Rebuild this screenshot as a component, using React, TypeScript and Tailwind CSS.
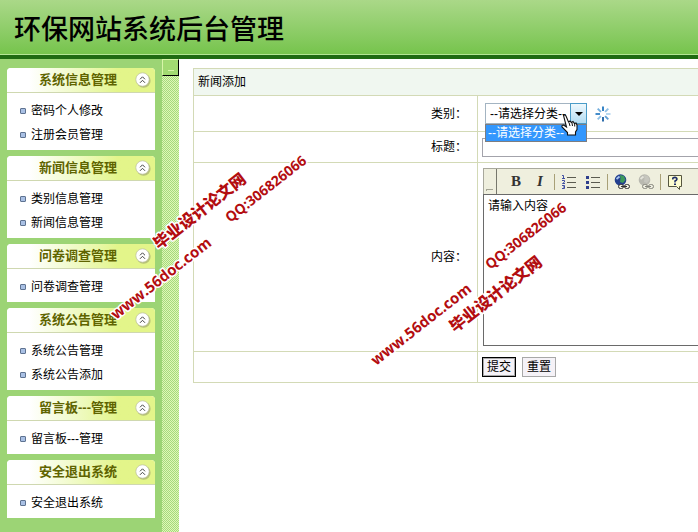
import type { ReactNode } from 'react';

interface MenuGroup {
  title: string;
  items: string[];
}

const MENU: MenuGroup[] = [
  { title: '系统信息管理', items: ['密码个人修改', '注册会员管理'] },
  { title: '新闻信息管理', items: ['类别信息管理', '新闻信息管理'] },
  { title: '问卷调查管理', items: ['问卷调查管理'] },
  { title: '系统公告管理', items: ['系统公告管理', '系统公告添加'] },
  { title: '留言板---管理', items: ['留言板---管理'] },
  { title: '安全退出系统', items: ['安全退出系统'] },
];

function CollapseIcon() {
  return (
    <svg viewBox="0 0 16 16" className="size-4">
      <circle cx="8.6" cy="8.8" r="7" fill="#9aa06c" opacity="0.6" />
      <circle cx="7.5" cy="7.5" r="6.7" fill="#fff" stroke="#b9bd9a" strokeWidth="0.7" />
      <path d="M5 7.3 7.5 4.8 10 7.3M5 10.8 7.5 8.3 10 10.8" fill="none" stroke="#444" strokeWidth="1" />
    </svg>
  );
}

function MenuPanel({ title, items }: MenuGroup) {
  return (
    <section className="overflow-hidden rounded-t bg-white">
      <button
        type="button"
        className="flex h-[25px] w-full items-center border-b border-[#cfd8b0] bg-linear-to-r from-white from-15% to-[#e3f58a] to-75% pr-1 pl-[14px]"
      >
        <span className="flex-1 text-center text-[13px] leading-4 font-bold text-[#5f6400]">{title}</span>
        <CollapseIcon />
      </button>
      <ul className="pt-1.5 pb-[3px]">
        {items.map((item) => (
          <li key={item} className="flex h-6 items-center gap-[5px] pl-[13px]">
            <span className="size-1.5 rounded-[1px] border border-[#5f7391] bg-[#a9c0e4]" />
            <a href="#" className="text-xs text-black">
              {item}
            </a>
          </li>
        ))}
      </ul>
    </section>
  );
}

function Row({ label, htmlFor, height, children }: { label: string; htmlFor?: string; height: string; children: ReactNode }) {
  return (
    <tr className={height}>
      <th scope="row" className="border border-[#d3dab6] pr-[10px] text-right font-normal">
        {label && <label htmlFor={htmlFor}>{label}</label>}
      </th>
      <td className="border border-r-0 border-[#d3dab6] p-0 pl-1">{children}</td>
    </tr>
  );
}

function Spinner() {
  const colors = ['#2f7fc4', '#8fc0e6', '#b4d6f0', '#5f9fd4', '#2466a8', '#8fc0e6', '#3a86c8', '#74aedd'];
  return (
    <svg viewBox="0 0 16 16" className="size-4">
      {colors.map((c, i) => (
        <path key={i} d="M8 0.5V5" stroke={c} strokeWidth="1.9" transform={`rotate(${i * 45} 8 8)`} />
      ))}
    </svg>
  );
}

function HandCursor() {
  return (
    <svg viewBox="0 0 17 22" className="pointer-events-none absolute top-[11px] left-[76px] z-20 h-[22px] w-[17px]">
      <path
        d="M2.500 1.500Q4 0 5 2L7.500 8 9 7 10.500 8.500 12 7.500 13.500 9.500 15 9 16 11V15.500L14.500 18V21H6.500V18.500L1 13Q0.500 11 2.500 11L5.500 13Z"
        fill="#fff"
        stroke="#111"
        strokeWidth="1.1"
      />
      <path d="M8 8.500 9 12M11 9 11.500 12M13.700 10V12.500" stroke="#111" />
    </svg>
  );
}

function CategorySelect() {
  return (
    <div className="relative w-[102px]">
      <select
        id="category"
        className="block h-[21px] w-full appearance-none border border-[#a3b4c2] bg-white pl-1 text-xs text-black outline-none"
      >
        <option>--请选择分类--</option>
      </select>
      <span className="pointer-events-none absolute inset-y-0 right-0 flex w-[17px] items-center justify-center border border-[#4a9cc8] bg-linear-to-b from-[#eef8fd] to-[#b2dcf2]">
        <svg viewBox="0 0 8 4" className="h-1 w-2">
          <path d="M0 0H8L4 4Z" fill="#000" />
        </svg>
      </span>
      <div className="absolute top-full left-0 z-10 w-full border border-[#7d7d80] bg-[#3397fd] pl-0.5 text-xs leading-4 text-white">
        --请选择分类--
      </div>
      <HandCursor />
    </div>
  );
}

function ListIcon({ ordered }: { ordered?: boolean }) {
  return (
    <svg viewBox="0 0 16 16" className="size-4">
      <path d="M6 3.500H15M6 8.500H15M6 13.500H15" stroke="#5b5b50" />
      {ordered ? (
        <path
          d="M1 1.500H2.500V4.500M1 4.500H4M1 6.500H3.500V8L1.500 9.500H4M1 11.500H3.500V14.500H1M2 13H3.500"
          fill="none"
          stroke="#2f3f9c"
          strokeWidth="0.9"
        />
      ) : (
        <path d="M1 2H4V5H1ZM1 7H4V10H1ZM1 12H4V15H1Z" fill="#2f3f8c" />
      )}
    </svg>
  );
}

function LinkIcon({ disabled }: { disabled?: boolean }) {
  return (
    <svg viewBox="0 0 16 16" className="size-4">
      <circle cx="6.500" cy="6" r="5.800" fill={disabled ? '#b9b9b0' : '#24408f'} />
      <path d="M6 1 10 2 11.500 6 9 9 6 8 6.500 4Z" fill={disabled ? '#c6c6be' : '#3c9a5a'} />
      <path d="M2.500 5 5.500 2.500" stroke={disabled ? '#e4e4dc' : '#a8c4f0'} strokeWidth="1.800" />
      <g fill="none" stroke={disabled ? '#85857c' : '#333'}>
        <rect x="4.500" y="10.500" width="5" height="4" rx="2" fill="#eeeee0" />
        <rect x="10.500" y="10.500" width="5" height="4" rx="2" fill="#eeeee0" />
        <path d="M7 12.500H13" />
      </g>
    </svg>
  );
}

function HelpIcon() {
  return (
    <svg viewBox="0 0 16 16" className="size-4">
      <path d="M1.500 1.500H14.500V12.500H12.500V15.500L9.500 12.500H1.500Z" fill="#fdfdd0" stroke="#555540" />
      <path d="M5.800 5.400V4.200Q8 2.500 9.800 4.200 10.500 5.800 8 7V8.500" fill="none" stroke="#1d2c6a" strokeWidth="1.500" />
      <rect x="7" y="9.500" width="2" height="1.500" fill="#1d2c6a" />
    </svg>
  );
}

function ToolButton({ label, children }: { label: string; children: ReactNode }) {
  return (
    <button
      type="button"
      aria-label={label}
      className="flex size-6 items-center justify-center font-['Liberation_Serif',serif] text-[15px] text-[#333]"
    >
      {children}
    </button>
  );
}

function Separator() {
  return <span className="mr-0.5 ml-0.5 h-4 w-px bg-[#a8a077]" />;
}

function Editor() {
  return (
    <div className="ml-px">
      <div className="flex h-[26px] items-stretch border-t border-l border-[#a8a89c] bg-[#efefde]">
        <span className="flex w-[13px] items-end border-r border-[#77776c] pb-[3px] pl-0.5">
          <span className="h-0.5 w-[7px] border-t border-l border-[#a5a595]" />
        </span>
        <div className="flex items-center pl-[7px]">
          <ToolButton label="Bold">
            <b>B</b>
          </ToolButton>
          <ToolButton label="Italic">
            <b className="italic">I</b>
          </ToolButton>
          <Separator />
          <ToolButton label="Numbered list">
            <ListIcon ordered />
          </ToolButton>
          <ToolButton label="Bulleted list">
            <ListIcon />
          </ToolButton>
          <Separator />
          <ToolButton label="Insert link">
            <LinkIcon />
          </ToolButton>
          <ToolButton label="Remove link">
            <LinkIcon disabled />
          </ToolButton>
          <Separator />
          <ToolButton label="Help">
            <HelpIcon />
          </ToolButton>
        </div>
      </div>
      <textarea
        id="content"
        defaultValue="请输入内容"
        className="block h-[152px] w-full resize-none border border-r-0 border-[#6a6a6a] bg-white px-1 py-0.5 text-xs leading-[18px] outline-none"
      />
    </div>
  );
}

function Watermark() {
  return (
    <svg
      aria-hidden="true"
      width="698"
      height="532"
      className="pointer-events-none absolute top-0 left-0 z-30 max-w-full overflow-hidden fill-[#b30d10] stroke-white font-['Open_Sans','Noto_Sans_CJK_SC',sans-serif] font-bold"
      strokeWidth="3"
      strokeLinejoin="round"
      paintOrder="stroke"
    >
      <text transform="translate(116 320) rotate(-38)" fontSize="15">www.56doc.com</text>
      <text transform="translate(159 250) rotate(-38)" fontSize="16" fontWeight="900">毕业设计论文网</text>
      <text transform="translate(230 223) rotate(-38)" fontSize="14">QQ:306826066</text>
      <text transform="translate(376 366) rotate(-38)" fontSize="15">www.56doc.com</text>
      <text transform="translate(455 333) rotate(-38)" fontSize="16" fontWeight="900">毕业设计论文网</text>
      <text transform="translate(490 270) rotate(-38)" fontSize="14">QQ:306826066</text>
    </svg>
  );
}

export default function App() {
  return (
    <div className="relative flex min-h-screen flex-col overflow-hidden bg-white font-['Liberation_Sans','Noto_Sans_CJK_SC',sans-serif] text-xs text-black">
      <header className="border-b-4 border-[#1f6b12]">
        <div className="border-b border-[#b4e694] bg-linear-to-b from-[#aad888] to-[#76c44c] pt-[14px] pb-[7px] pl-[14px]">
          <h1 className="text-[27px] leading-[33px] font-medium">环保网站系统后台管理</h1>
        </div>
      </header>
      <div className="flex flex-1">
        <nav className="flex w-[162px] shrink-0 flex-col gap-1.5 bg-[#9cd475] py-[9px] pr-[7px] pl-[7px]">
          {MENU.map((group) => (
            <MenuPanel key={group.title} {...group} />
          ))}
        </nav>
        <div className="w-[17px] shrink-0 bg-[conic-gradient(#a5db7c_25%,#e0f6b8_0_50%,#a5db7c_0_75%,#e0f6b8_0)] bg-size-[2px_2px]">
          <button
            type="button"
            aria-label="Toggle menu"
            className="flex size-[17px] items-end justify-center border border-t-[#d8f5a8] border-r-black border-b-black border-l-[#d8f5a8] bg-[#a2da72] pb-1"
          >
            <span className="h-px w-1.5 bg-[#d8f5a8]" />
          </button>
        </div>
        <main className="min-w-0 flex-1 pt-[9px] pl-[14px]">
          <form>
            <table className="w-full border-collapse">
              <colgroup>
                <col className="w-[284px]" />
                <col />
              </colgroup>
              <tbody>
                <tr className="h-[27px]">
                  <th colSpan={2} className="border border-r-0 border-[#d3dab6] bg-[#f0f7f0] pl-1 text-left font-normal">
                    新闻添加
                  </th>
                </tr>
                <Row label="类别：" htmlFor="category" height="h-9">
                  <div className="flex items-center gap-2 pl-[3px]">
                    <CategorySelect />
                    <Spinner />
                  </div>
                </Row>
                <Row label="标题：" htmlFor="title" height="h-[31px]">
                  <input
                    id="title"
                    type="text"
                    className="block h-[19px] w-full border border-r-0 border-[#a3a3ab] bg-white px-1 outline-none"
                  />
                </Row>
                <Row label="内容：" htmlFor="content" height="h-[189px]">
                  <Editor />
                </Row>
                <Row label="" height="h-[31px]">
                  <div className="flex gap-1.5">
                    <button
                      type="submit"
                      className="h-5 w-[34px] border border-black bg-[#f5f2f7] leading-4 inset-ring inset-ring-[#a8a8a8]"
                    >
                      提交
                    </button>
                    <button type="reset" className="h-5 w-[34px] border border-[#a8a8a8] bg-[#f5f2f7] leading-4">
                      重置
                    </button>
                  </div>
                </Row>
              </tbody>
            </table>
          </form>
        </main>
      </div>
      <Watermark />
    </div>
  );
}
